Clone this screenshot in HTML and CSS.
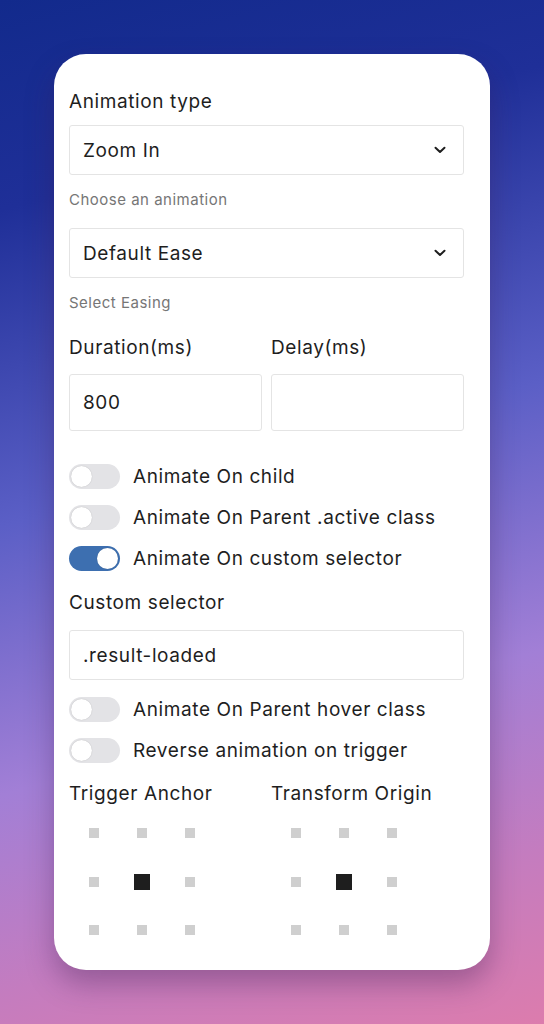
FILE: index.html
```html
<!DOCTYPE html>
<html lang="en">
<head>
<meta charset="UTF-8">
<meta name="viewport" content="width=device-width, initial-scale=1.0">
<title>Animation Settings</title>
<link rel="stylesheet" href="styles.css">
</head>
<body>

<div class="panel">
    <div class="label">Animation type</div>
    <div class="select">
        <span>Zoom In</span>
        <svg class="chevron" width="12" height="8" viewBox="0 0 12 8"><path d="M1.5 1.8 L6 6 L10.5 1.8" fill="none" stroke="#1e1e1e" stroke-width="2" stroke-linecap="round" stroke-linejoin="round"/></svg>
    </div>
    <div class="help">Choose an animation</div>

    <div class="select second">
        <span>Default Ease</span>
        <svg class="chevron" width="12" height="8" viewBox="0 0 12 8"><path d="M1.5 1.8 L6 6 L10.5 1.8" fill="none" stroke="#1e1e1e" stroke-width="2" stroke-linecap="round" stroke-linejoin="round"/></svg>
    </div>
    <div class="help">Select Easing</div>

    <div class="two-col timing">
        <div>
            <div class="label">Duration(ms)</div>
            <input class="field tall" type="text" value="800">
        </div>
        <div>
            <div class="label">Delay(ms)</div>
            <input class="field tall" type="text" value="">
        </div>
    </div>

    <div class="toggles first-group">
        <div class="toggle-row"><div class="toggle"><div class="knob"></div></div><span>Animate On child</span></div>
        <div class="toggle-row"><div class="toggle"><div class="knob"></div></div><span>Animate On Parent .active class</span></div>
        <div class="toggle-row"><div class="toggle on"><div class="knob"></div></div><span>Animate On custom selector</span></div>
    </div>

    <div class="label custom-label">Custom selector</div>
    <input class="field" type="text" value=".result-loaded">

    <div class="toggles second-group">
        <div class="toggle-row"><div class="toggle"><div class="knob"></div></div><span>Animate On Parent hover class</span></div>
        <div class="toggle-row"><div class="toggle"><div class="knob"></div></div><span>Reverse animation on trigger</span></div>
    </div>

    <div class="two-col anchors">
        <div>
            <div class="label">Trigger Anchor</div>
            <div class="grid">
                <div class="cell"><i></i></div><div class="cell"><i></i></div><div class="cell"><i></i></div>
                <div class="cell"><i></i></div><div class="cell active"><i></i></div><div class="cell"><i></i></div>
                <div class="cell"><i></i></div><div class="cell"><i></i></div><div class="cell"><i></i></div>
            </div>
        </div>
        <div>
            <div class="label">Transform Origin</div>
            <div class="grid">
                <div class="cell"><i></i></div><div class="cell"><i></i></div><div class="cell"><i></i></div>
                <div class="cell"><i></i></div><div class="cell active"><i></i></div><div class="cell"><i></i></div>
                <div class="cell"><i></i></div><div class="cell"><i></i></div><div class="cell"><i></i></div>
            </div>
        </div>
    </div>
</div>

</body>
</html>
```

FILE: styles.css
```css
body {
    margin: 0;
    padding: 54px 0 0 54px;
    height: 1024px;
    box-sizing: border-box;
    font-family: Inter, "Noto Sans", sans-serif;
    color: #1e1e1e;
    background: linear-gradient(165deg, #122a8c 0%, #1f2f98 18%, #5b5fc6 45%, #a27fd6 68%, #c47cbf 85%, #dc7cad 100%);
    overflow: hidden;
}
.panel {
    width: 436px;
    box-sizing: border-box;
    background-color: #fff;
    border-radius: 32px;
    padding: 36px 26px 15px 15px;
    box-shadow: 0px 14px 28px rgba(60, 30, 80, 0.35);
}
.label {
    font-size: 19px;
    line-height: 24px;
    letter-spacing: 0.6px;
    margin-bottom: 11px;
}
.select {
    height: 50px;
    box-sizing: border-box;
    border: 1px solid #e4e4e4;
    border-radius: 3px;
    padding: 0 17px 0 13px;
    display: flex;
    align-items: center;
    justify-content: space-between;
    font-size: 19px;
    letter-spacing: 0.6px;
}
.select.second {
    margin-top: 18px;
}
.help {
    font-size: 15px;
    line-height: 20px;
    letter-spacing: 0.5px;
    color: #767676;
    margin-top: 15px;
}
.two-col {
    display: grid;
    grid-template-columns: 1fr 1fr;
    column-gap: 9px;
}
.timing {
    margin-top: 23px;
}
.timing .label {
    margin-bottom: 14px;
}
.field {
    display: block;
    width: 100%;
    height: 50px;
    box-sizing: border-box;
    border: 1px solid #e4e4e4;
    border-radius: 3px;
    padding: 0 13px;
    font-family: inherit;
    font-size: 19px;
    letter-spacing: 0.6px;
    color: #1e1e1e;
    outline: none;
}
.field.tall {
    height: 57px;
}
.toggles {
    display: flex;
    flex-direction: column;
    gap: 16px;
}
.first-group {
    margin-top: 33px;
}
.second-group {
    margin-top: 17px;
}
.toggle-row {
    display: flex;
    align-items: center;
    height: 25px;
    font-size: 19px;
    letter-spacing: 0.6px;
}
.toggle {
    position: relative;
    width: 51px;
    height: 25px;
    border-radius: 13px;
    background-color: #e3e3e6;
    margin-right: 13px;
    flex-shrink: 0;
}
.toggle .knob {
    position: absolute;
    top: 2px;
    left: 2px;
    width: 21px;
    height: 21px;
    border-radius: 50%;
    background-color: #fff;
    box-shadow: 0 0 1px rgba(0, 0, 0, 0.25);
}
.toggle.on {
    background-color: #3d6fb0;
}
.toggle.on .knob {
    left: 28px;
}
.custom-label {
    margin-top: 20px;
    margin-bottom: 15px;
}
.anchors {
    margin-top: 19px;
}
.anchors .label {
    margin-bottom: 3px;
}
.grid {
    display: grid;
    grid-template-columns: repeat(3, 48px);
    grid-auto-rows: 48.5px;
    padding-left: 1px;
}
.cell {
    display: flex;
    align-items: center;
    justify-content: center;
}
.cell i {
    display: block;
    width: 10px;
    height: 10px;
    background-color: #cfcfcf;
}
.cell.active i {
    width: 16px;
    height: 16px;
    background-color: #1e1e1e;
}
```
